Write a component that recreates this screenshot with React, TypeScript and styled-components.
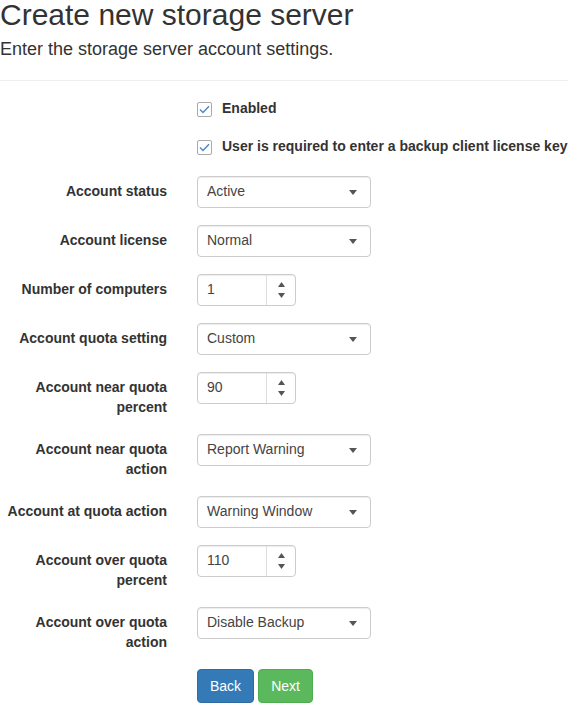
import styled, { createGlobalStyle } from "styled-components";

const GlobalStyle = createGlobalStyle`
  html, body {
    margin: 0;
    padding: 0;
    background: #ffffff;
  }
  body {
    font-family: "Liberation Sans", Arial, sans-serif;
    font-size: 14px;
    line-height: 20px;
    color: #333333;
  }
`;

const Page = styled.div`
  width: 568px;
  overflow: hidden;
`;

const Title = styled.h1`
  margin: 0;
  font-size: 30px;
  font-weight: 400;
  line-height: 30px;
  padding-bottom: 1px;
  color: #333333;
  white-space: nowrap;
`;

const Lead = styled.p`
  margin: 6px 0 0;
  font-size: 18px;
  line-height: 25px;
  color: #333333;
`;

const Rule = styled.hr`
  margin: 18px 0 0;
  border: 0;
  border-top: 1px solid #eeeeee;
`;

const Form = styled.form`
  padding-top: 17px;
`;

const Checks = styled.div`
  display: flex;
  flex-direction: column;
  gap: 18px;
  margin-bottom: 20px;
  padding-left: 197px;
`;

const CheckRow = styled.label`
  display: flex;
  align-items: flex-start;
  gap: 10px;
  font-weight: 700;
  line-height: 20px;
  white-space: nowrap;
`;

const Box = styled.span`
  flex: none;
  width: 13px;
  height: 13px;
  margin-top: 4px;
  border: 1px solid #a9a9a9;
  border-radius: 2px;
  background: #ffffff;
  display: flex;
  align-items: center;
  justify-content: center;
`;

const Group = styled.div`
  display: grid;
  grid-template-columns: 167px 1fr;
  column-gap: 30px;
  align-items: start;
  min-height: 34px;
  margin-bottom: 15px;
`;

const Label = styled.label`
  text-align: right;
  font-weight: 700;
  line-height: 20px;
  padding: 5px 0 2px;
`;

const Control = styled.div<{ $w: number }>`
  box-sizing: border-box;
  width: ${(p) => p.$w}px;
  height: 32px;
  border: 1px solid #cccccc;
  border-radius: 4px;
  box-shadow: inset 0 1px 1px rgba(0, 0, 0, 0.075);
  background: #ffffff;
  display: flex;
  align-items: center;
  color: #444444;
  font-size: 14px;
`;

const Value = styled.span`
  flex: 1;
  padding: 0 0 2px 9px;
  white-space: nowrap;
`;

const CaretBox = styled.span`
  width: 30px;
  display: flex;
  justify-content: center;
  margin-right: 2px;
`;

const Spinner = styled.span`
  align-self: stretch;
  width: 28px;
  border-left: 1px solid #dddddd;
  display: flex;
  flex-direction: column;
  align-items: center;
  justify-content: center;
  gap: 6px;
`;

const Actions = styled.div`
  display: flex;
  gap: 4px;
  padding-left: 197px;
`;

const Button = styled.button<{ $tone: "primary" | "success" }>`
  font-family: "Liberation Sans", Arial, sans-serif;
  font-size: 14px;
  line-height: 20px;
  padding: 6px 12px;
  border-radius: 4px;
  color: #ffffff;
  cursor: pointer;
  background: ${(p) => (p.$tone === "primary" ? "#337ab7" : "#5cb85c")};
  border: 1px solid ${(p) => (p.$tone === "primary" ? "#2e6da4" : "#4cae4c")};
`;

const Check = () => (
  <Box>
    <svg width="11" height="9" viewBox="0 0 11 9">
      <path d="M1 4.6 L4 7.6 L10 1.2" fill="none" stroke="#4a86c8" strokeWidth="1.4" />
    </svg>
  </Box>
);

const Caret = () => (
  <svg width="8" height="5" viewBox="0 0 8 5">
    <path d="M0 0 H8 L4 5 Z" fill="#555555" />
  </svg>
);

const Select = ({ value }: { value: string }) => (
  <Control $w={174}>
    <Value>{value}</Value>
    <CaretBox>
      <Caret />
    </CaretBox>
  </Control>
);

const NumberBox = ({ value }: { value: string }) => (
  <Control $w={99}>
    <Value>{value}</Value>
    <Spinner>
      <svg width="7" height="5" viewBox="0 0 7 5">
        <path d="M0 5 H7 L3.5 0 Z" fill="#555555" />
      </svg>
      <svg width="7" height="5" viewBox="0 0 7 5">
        <path d="M0 0 H7 L3.5 5 Z" fill="#555555" />
      </svg>
    </Spinner>
  </Control>
);

const fields: { label: string; kind: "select" | "number"; value: string }[] = [
  { label: "Account status", kind: "select", value: "Active" },
  { label: "Account license", kind: "select", value: "Normal" },
  { label: "Number of computers", kind: "number", value: "1" },
  { label: "Account quota setting", kind: "select", value: "Custom" },
  { label: "Account near quota percent", kind: "number", value: "90" },
  { label: "Account near quota action", kind: "select", value: "Report Warning" },
  { label: "Account at quota action", kind: "select", value: "Warning Window" },
  { label: "Account over quota percent", kind: "number", value: "110" },
  { label: "Account over quota action", kind: "select", value: "Disable Backup" },
];

const App = () => {
  return (
    <Page>
      <GlobalStyle />
      <Title>Create new storage server</Title>
      <Lead>Enter the storage server account settings.</Lead>
      <Rule />
      <Form onSubmit={(e) => e.preventDefault()}>
        <Checks>
          <CheckRow>
            <Check />
            Enabled
          </CheckRow>
          <CheckRow>
            <Check />
            User is required to enter a backup client license key
          </CheckRow>
        </Checks>
        {fields.map((f) => (
          <Group key={f.label}>
            <Label>{f.label}</Label>
            <div>
              {f.kind === "select" ? <Select value={f.value} /> : <NumberBox value={f.value} />}
            </div>
          </Group>
        ))}
        <Actions>
          <Button type="button" $tone="primary">Back</Button>
          <Button type="submit" $tone="success">Next</Button>
        </Actions>
      </Form>
    </Page>
  );
};

export default App;
